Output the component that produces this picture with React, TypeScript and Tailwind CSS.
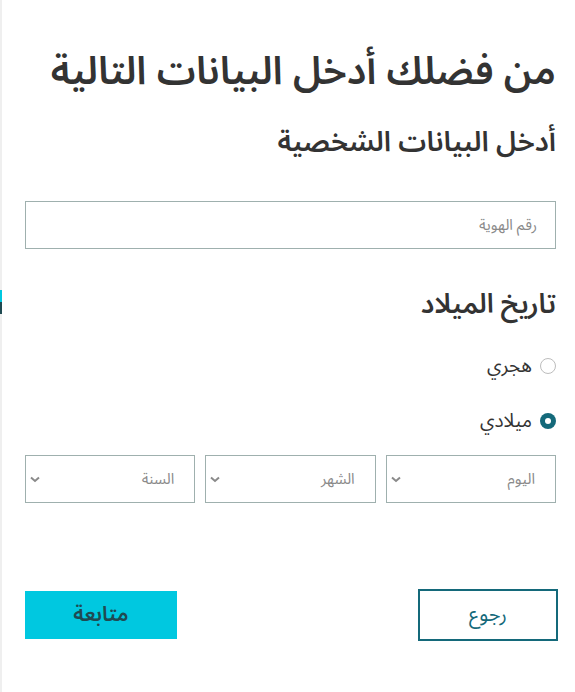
const font = { fontFamily: '"Noto Sans Arabic", "Noto Kufi Arabic", "DejaVu Sans", sans-serif' };

function Chevron() {
  return (
    <svg width="10" height="7" viewBox="0 0 10 7" className="text-[#8a8a8a]">
      <polyline points="1,1.5 5,5 9,1.5" fill="none" stroke="currentColor" strokeWidth="2" />
    </svg>
  );
}

function DateSelect({ label }: { label: string }) {
  return (
    <div className="flex h-[48px] flex-1 items-center justify-between border border-[#9fb0ae] pl-[4px] pr-[20px]">
      <span className="text-[15px] text-[#8a8a8a]">{label}</span>
      <Chevron />
    </div>
  );
}

function Radio({ label, checked }: { label: string; checked?: boolean }) {
  return (
    <label className="flex h-[28px] items-center gap-[8px]">
      {checked ? (
        <span className="flex h-[16px] w-[16px] items-center justify-center rounded-full bg-[#14697a]">
          <span className="h-[6px] w-[6px] rounded-full bg-white" />
        </span>
      ) : (
        <span className="h-[16px] w-[16px] rounded-full border border-[#bdbdbd] bg-white" />
      )}
      <span className="text-[19px] leading-[28px] text-[#333]">{label}</span>
    </label>
  );
}

export default function App() {
  return (
    <div className="flex min-h-[692px] w-[575px] bg-white" style={font}>
      <div className="flex w-[2px] flex-col bg-[#efefef]">
        <div className="h-[290px]" />
        <div className="h-[12px] bg-[#00c8e0]" />
        <div className="h-[12px] bg-[#1f4a52]" />
      </div>
      <div dir="rtl" className="flex flex-1 flex-col pl-[23px] pr-[19px] pt-[44px]">
        <h1 className="text-[39px] font-semibold leading-[56px] text-[#333]">
          من فضلك أدخل البيانات التالية
        </h1>
        <h2 className="mt-[23px] text-[28px] font-semibold leading-[40px] text-[#333]">
          أدخل البيانات الشخصية
        </h2>
        <div className="mt-[38px] flex h-[48px] items-center border border-[#9fb0ae] px-[18px]">
          <span className="text-[15px] text-[#8a8a8a]">رقم الهوية</span>
        </div>
        <h2 className="mt-[36px] text-[27px] font-semibold leading-[40px] text-[#333]">
          تاريخ الميلاد
        </h2>
        <div className="mt-[27px] flex flex-col gap-[27px]">
          <Radio label="هجري" />
          <Radio label="ميلادي" checked />
        </div>
        <div className="mt-[20px] flex gap-[10px]">
          <DateSelect label="اليوم" />
          <DateSelect label="الشهر" />
          <DateSelect label="السنة" />
        </div>
        <div className="mt-[86px] flex items-center justify-between">
          <button className="-mr-[2px] h-[52px] w-[140px] border-2 border-[#14697a] bg-white text-[20px] text-[#14697a]">
            رجوع
          </button>
          <button className="h-[48px] w-[152px] bg-[#00c8e0] text-[21px] font-semibold text-[#1f4a52]">
            متابعة
          </button>
        </div>
      </div>
    </div>
  );
}
